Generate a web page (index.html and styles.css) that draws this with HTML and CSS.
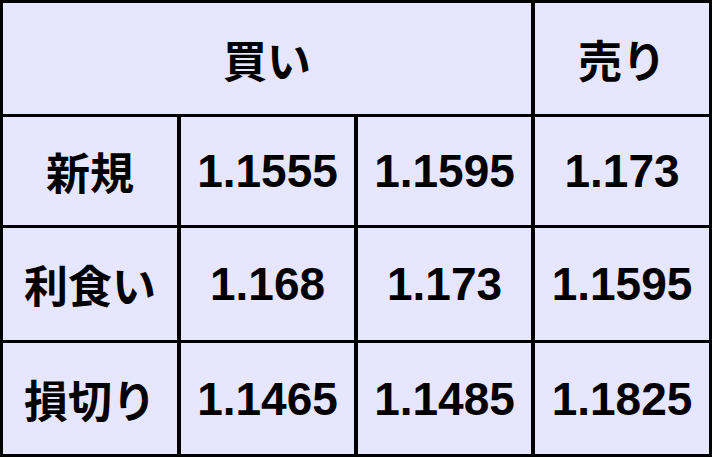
FILE: index.html
```html
<!DOCTYPE html>
<html lang="ja">
<head>
<meta charset="utf-8">
<link rel="stylesheet" href="styles.css">
</head>
<body>
<div class="grid">
  <div class="cell jp span3">買い</div>
  <div class="cell jp">売り</div>
  <div class="cell jp">新規</div>
  <div class="cell num">1.1555</div>
  <div class="cell num">1.1595</div>
  <div class="cell num">1.173</div>
  <div class="cell jp">利食い</div>
  <div class="cell num">1.168</div>
  <div class="cell num">1.173</div>
  <div class="cell num">1.1595</div>
  <div class="cell jp">損切り</div>
  <div class="cell num">1.1465</div>
  <div class="cell num">1.1485</div>
  <div class="cell num">1.1825</div>
</div>
</body>
</html>
```
FILE: styles.css
```css
html, body {
  margin: 0;
  padding: 0;
  background: #000;
}
.grid {
  width: 712px;
  height: 457px;
  box-sizing: border-box;
  padding: 3px;
  background: #000;
  display: grid;
  grid-template-columns: 174px 173px 173px 174px;
  grid-template-rows: 111px 108px 112px 111px;
  column-gap: 4px;
  row-gap: 3px;
}
.cell {
  background: #e6e6ff;
  display: flex;
  align-items: center;
  justify-content: center;
  color: #000;
  font-weight: bold;
}
.span3 {
  grid-column: span 3;
}
.jp {
  font-family: "Noto Sans CJK JP", sans-serif;
  font-size: 44px;
}
.num {
  font-family: "Liberation Sans", Arial, sans-serif;
  font-size: 46px;
}
```
